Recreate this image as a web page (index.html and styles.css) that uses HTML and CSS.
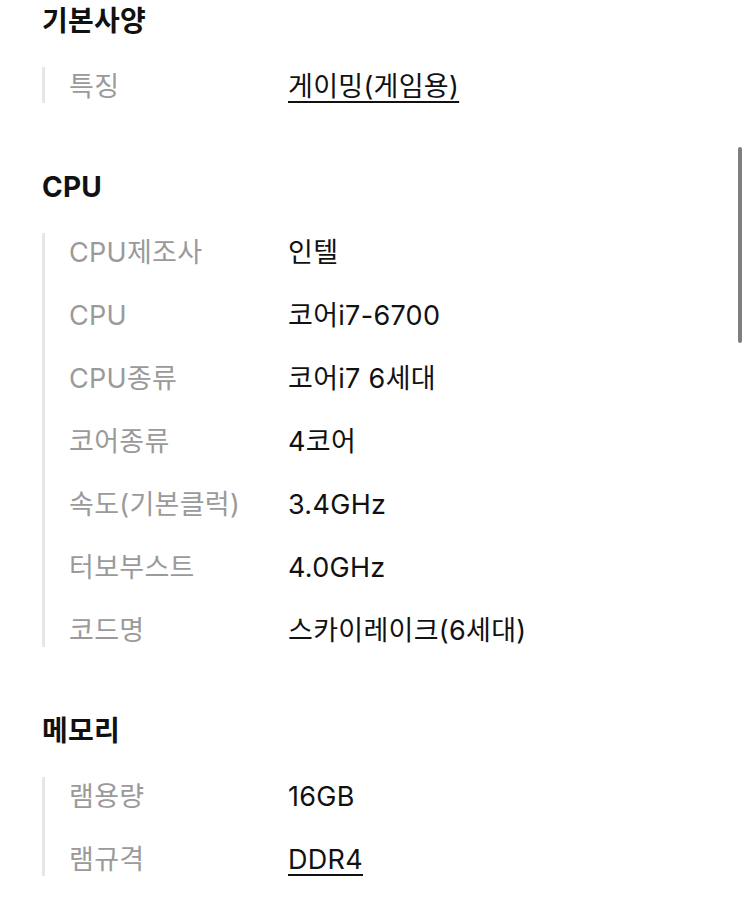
FILE: index.html
```html
<!DOCTYPE html>
<html lang="ko">
<head>
<meta charset="utf-8">
<link rel="stylesheet" href="styles.css">
</head>
<body>
<main class="spec">
  <section class="group">
    <h2 class="group-title">기본사양</h2>
    <dl class="rows">
      <div class="row"><dt>특징</dt><dd><span class="link">게이밍(게임용)</span></dd></div>
    </dl>
  </section>
  <section class="group">
    <h2 class="group-title">CPU</h2>
    <dl class="rows">
      <div class="row"><dt>CPU제조사</dt><dd>인텔</dd></div>
      <div class="row"><dt>CPU</dt><dd>코어i7-6700</dd></div>
      <div class="row"><dt>CPU종류</dt><dd>코어i7 6세대</dd></div>
      <div class="row"><dt>코어종류</dt><dd>4코어</dd></div>
      <div class="row"><dt>속도(기본클럭)</dt><dd>3.4GHz</dd></div>
      <div class="row"><dt>터보부스트</dt><dd>4.0GHz</dd></div>
      <div class="row"><dt>코드명</dt><dd>스카이레이크(6세대)</dd></div>
    </dl>
  </section>
  <section class="group">
    <h2 class="group-title">메모리</h2>
    <dl class="rows">
      <div class="row"><dt>램용량</dt><dd>16GB</dd></div>
      <div class="row"><dt>램규격</dt><dd><span class="link">DDR4</span></dd></div>
    </dl>
  </section>
</main>
<div class="scrollbar"></div>
</body>
</html>
```
FILE: styles.css
```css
html, body {
  margin: 0;
  padding: 0;
  background: #ffffff;
}
body {
  font-family: "Inter", "Noto Sans CJK KR", sans-serif;
  color: #111111;
  overflow: hidden;
}
.spec {
  padding: 3px 0 0 42px;
}
.group + .group {
  margin-top: 66px;
}
.group-title {
  margin: 0 0 28px 0;
  font-size: 28px;
  line-height: 36px;
  font-weight: 700;
  color: #111111;
  letter-spacing: 0.2px;
}
.rows {
  margin: 0;
  border-left: 3px solid #e6e6e6;
  display: flex;
  flex-direction: column;
  gap: 27px;
}
.row {
  box-sizing: border-box;
  display: grid;
  grid-template-columns: 219px 1fr;
  height: 36px;
  padding: 4px 0 0 24px;
  align-items: start;
  font-size: 27px;
  line-height: 32px;
  letter-spacing: 0.3px;
}
.row dt {
  color: #9a9a9a;
  margin: 0;
}
.row dd {
  margin: 0;
  color: #111111;
}
.link {
  text-decoration: underline;
  text-decoration-thickness: 2px;
  text-underline-offset: 5px;
}
.scrollbar {
  position: fixed;
  left: 738px;
  top: 147px;
  width: 4px;
  height: 196px;
  border-radius: 2px;
  background: #7f7f7f;
}
```
